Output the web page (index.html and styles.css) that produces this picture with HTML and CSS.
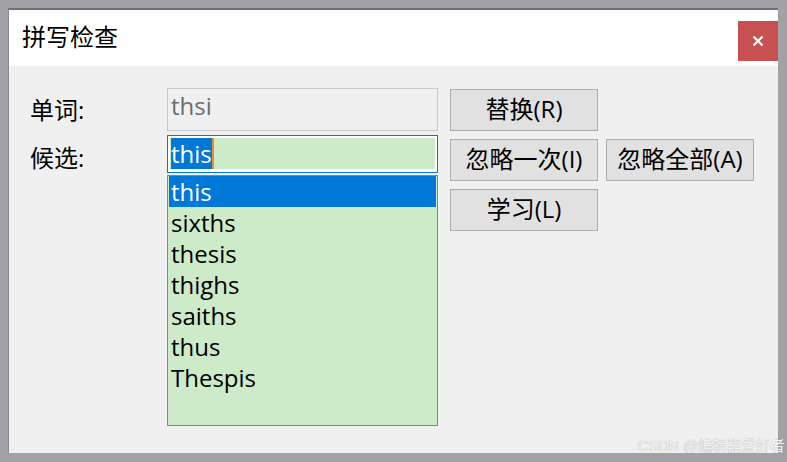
FILE: index.html
```html
<!DOCTYPE html>
<html lang="zh-CN">
<head>
<meta charset="utf-8">
<title>拼写检查</title>
<link rel="stylesheet" href="styles.css">
</head>
<body>
<div class="window">
  <div class="titlebar">
    <div class="title">拼写检查</div>
    <div class="close">
      <svg width="12" height="12" viewBox="0 0 12 12"><path d="M1.5 1.5 L10.5 10.5 M10.5 1.5 L1.5 10.5" stroke="#fff" stroke-width="2.2" fill="none"/></svg>
    </div>
  </div>
  <div class="content">
    <div class="labels">
      <div class="label">单词:</div>
      <div class="label">候选:</div>
    </div>
    <div class="fields">
      <div class="word-field">thsi</div>
      <div class="cand-input"><div class="cand-inner"><span class="sel">this</span><span class="caret"></span></div></div>
      <div class="listbox">
        <div class="item active">this</div>
        <div class="item">sixths</div>
        <div class="item">thesis</div>
        <div class="item">thighs</div>
        <div class="item">saiths</div>
        <div class="item">thus</div>
        <div class="item">Thespis</div>
      </div>
    </div>
    <div class="buttons">
      <div class="btn">替换(R)</div>
      <div class="spacer"></div>
      <div class="btn">忽略一次(I)</div>
      <div class="btn">忽略全部(A)</div>
      <div class="btn">学习(L)</div>
    </div>
  </div>
</div>
<div class="watermark">CSDN @编辑器爱好者</div>
</body>
</html>
```
FILE: styles.css
```css
html, body {
  margin: 0;
  padding: 0;
}
body {
  width: 787px;
  height: 462px;
  overflow: hidden;
  background: #a2a1a6;
  font-family: "Open Sans", "Noto Sans CJK SC", sans-serif;
  position: relative;
  color: #000;
}
.window {
  box-sizing: border-box;
  margin: 8px 0 0 8px;
  width: 770px;
  height: 445px;
  border-top: 2px solid #707070;
  border-left: 1px solid #8a8a8a;
  display: flex;
  flex-direction: column;
}
.titlebar {
  height: 56px;
  background: #fff;
  display: flex;
  flex-shrink: 0;
}
.title {
  align-self: center;
  padding-left: 13px;
  font-size: 24px;
  line-height: 30px;
  margin-top: -2px;
}
.close {
  margin-left: auto;
  margin-top: 11px;
  width: 40px;
  height: 40px;
  background: #c75050;
  display: flex;
  align-items: center;
  justify-content: center;
}
.close svg { display: block; }
.content {
  flex: 1;
  background: #f0f0f0;
  display: flex;
  align-items: flex-start;
}
.labels {
  width: 137px;
  padding-left: 21px;
  padding-top: 29px;
  display: flex;
  flex-direction: column;
  gap: 18px;
}
.label {
  font-size: 24px;
  line-height: 30px;
}
.fields {
  width: 271px;
  padding-top: 22px;
  display: flex;
  flex-direction: column;
}
.word-field {
  box-sizing: border-box;
  height: 43px;
  border: 1px solid #c9c9c9;
  background: #f0f0f0;
  color: #6d6d6d;
  font-size: 24px;
  line-height: 30px;
  padding: 2px 3px;
}
.cand-input {
  box-sizing: border-box;
  margin-top: 4px;
  height: 38px;
  border: 1px solid #0078d7;
  background: #fff;
  padding: 2px 2px 3px 2px;
}
.cand-inner {
  height: 31px;
  background: #cdebc8;
  padding-left: 1px;
  display: flex;
  font-size: 24px;
  line-height: 31px;
}
.sel {
  background: #0078d7;
  color: #fff;
}
.caret {
  width: 2px;
  height: 31px;
  background: #f08a24;
}
.listbox {
  box-sizing: border-box;
  margin-top: 2px;
  height: 251px;
  border: 1px solid #828790;
  background: #cdebc8;
  padding: 0 1px;
}
.item {
  height: 31px;
  line-height: 31px;
  font-size: 24px;
  padding-left: 2px;
}
.item.active {
  background: #0078d7;
  color: #fff;
}
.buttons {
  margin-left: 12px;
  padding-top: 23px;
  display: grid;
  grid-template-columns: 148px 148px;
  column-gap: 8px;
  row-gap: 8px;
}
.btn {
  box-sizing: border-box;
  height: 42px;
  border: 1px solid #adadad;
  background: #e1e1e1;
  font-size: 24px;
  line-height: 38px;
  text-align: center;
}
.watermark {
  position: absolute;
  left: 638px;
  top: 437px;
  font-family: "Liberation Sans", "Noto Sans CJK SC", sans-serif;
  font-size: 14.5px;
  line-height: 18px;
  color: #f2f2f2;
  text-shadow: 0 0 1px #999;
  white-space: nowrap;
}
```
